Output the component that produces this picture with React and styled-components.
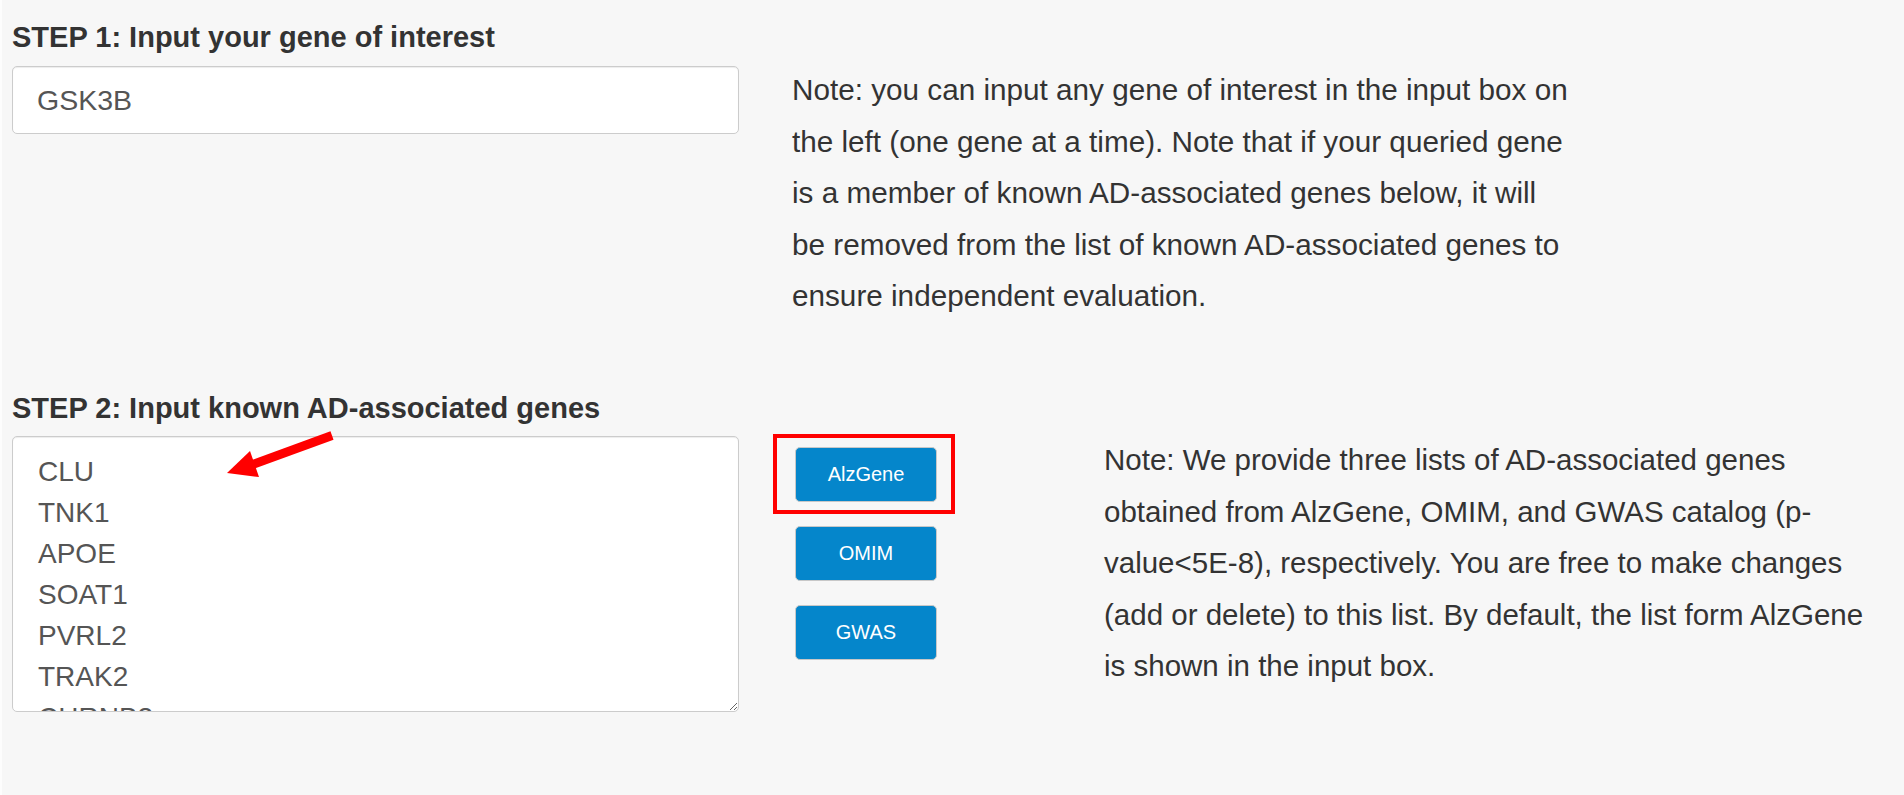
import React from "react";
import styled, { createGlobalStyle } from "styled-components";

const GlobalStyle = createGlobalStyle`
  html, body {
    margin: 0;
    background: #f7f7f7;
  }
  body {
    font-family: "Liberation Sans", Arial, sans-serif;
    color: #333;
  }
`;

const Page = styled.div`
  display: flow-root;
  min-height: 795px;
  box-sizing: border-box;
  padding: 20px 0 0 10px;
  border-left: 2px solid #fdfdfd;
`;

const Section = styled.section`
  margin-top: ${(p) => p.$top || 0}px;
`;

const StepTitle = styled.h3`
  margin: 0 0 ${(p) => p.$gap}px;
  font-size: 29px;
  line-height: 34px;
  font-weight: bold;
  color: #333;
`;

const Row = styled.div`
  display: flex;
  align-items: flex-start;
`;

const GeneInput = styled.input`
  box-sizing: border-box;
  width: 727px;
  height: 68px;
  padding: 0 24px;
  border: 1px solid #ccc;
  border-radius: 5px;
  background: #fff;
  box-shadow: inset 0 1px 1px rgba(0, 0, 0, 0.075);
  font-family: inherit;
  font-size: 28.5px;
  color: #555;
  outline: none;
`;

const Note = styled.p`
  margin: -2px 0 0 ${(p) => p.$gap}px;
  width: ${(p) => p.$width}px;
  font-size: ${(p) => p.$size}px;
  line-height: 51.6px;
  color: #333;
`;

const ListWrap = styled.div`
  position: relative;
`;

const GeneList = styled.textarea`
  display: block;
  box-sizing: border-box;
  width: 727px;
  height: 276px;
  padding: 14px 25px;
  border: 1px solid #ccc;
  border-radius: 5px;
  background: #fff;
  box-shadow: inset 0 1px 1px rgba(0, 0, 0, 0.075);
  font-family: inherit;
  font-size: 28px;
  line-height: 41px;
  color: #555;
  overflow: hidden;
  outline: none;
`;

const Arrow = styled.svg`
  position: absolute;
  left: 208px;
  top: -11px;
  width: 120px;
  height: 55px;
  overflow: visible;
  pointer-events: none;
`;

const ButtonColumn = styled.div`
  display: flex;
  flex-direction: column;
  gap: 24px;
  margin-left: 56px;
  padding-top: 11px;
`;

const Highlight = styled.div`
  position: relative;
  &::after {
    content: "";
    position: absolute;
    top: -13px;
    left: -22px;
    right: -18px;
    bottom: -12px;
    border: 4px solid #ff0000;
    pointer-events: none;
  }
`;

const ListButton = styled.button`
  display: block;
  box-sizing: border-box;
  width: 142px;
  height: 55px;
  padding: 0;
  border: 1px solid #c8c8c8;
  border-radius: 5px;
  background: #0586cb;
  color: #fff;
  font-family: inherit;
  font-size: 20px;
  cursor: pointer;
`;

const genes = [
  "CLU",
  "TNK1",
  "APOE",
  "SOAT1",
  "PVRL2",
  "TRAK2",
  "CHRNB2",
  "CR1",
  "PICALM",
  "BIN1",
];

const App = () => {
  return (
    <>
      <GlobalStyle />
      <Page>
        <Section>
          <StepTitle $gap={12}>STEP 1: Input your gene of interest</StepTitle>
          <Row>
            <GeneInput type="text" defaultValue="GSK3B" />
            <Note $gap={53} $width={792} $size={29.7}>
              Note: you can input any gene of interest in the input box on the
              left (one gene at a time). Note that if your queried gene is a
              member of known AD-associated genes below, it will be&nbsp;removed
              from the list of known AD-associated genes to ensure independent
              evaluation.
            </Note>
          </Row>
        </Section>

        <Section $top={69}>
          <StepTitle $gap={11}>STEP 2: Input known AD-associated genes</StepTitle>
          <Row>
            <ListWrap>
              <GeneList defaultValue={genes.join("\n")} />
              <Arrow viewBox="0 0 120 55">
                <line
                  x1="112"
                  y1="10.5"
                  x2="30"
                  y2="40.5"
                  stroke="#ff0000"
                  strokeWidth="9"
                />
                <polygon points="7,48 30,26 39,52" fill="#ff0000" />
              </Arrow>
            </ListWrap>
            <ButtonColumn>
              <Highlight>
                <ListButton>AlzGene</ListButton>
              </Highlight>
              <ListButton>OMIM</ListButton>
              <ListButton>GWAS</ListButton>
            </ButtonColumn>
            <Note $gap={167} $width={785} $size={29.5}>
              Note: We provide three lists of AD-associated genes obtained from
              AlzGene, OMIM, and GWAS catalog (p-value&lt;5E-8), respectively.
              You are free to make changes (add or delete) to this list. By
              default, the list form AlzGene is shown in the input box.
            </Note>
          </Row>
        </Section>
      </Page>
    </>
  );
};

export default App;
